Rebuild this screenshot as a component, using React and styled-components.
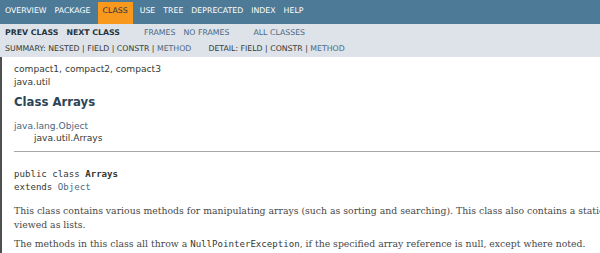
import React from 'react';
import styled, { createGlobalStyle } from 'styled-components';

const GlobalStyle = createGlobalStyle`
  html, body {
    margin: 0;
    padding: 0;
    overflow: hidden;
    background: #ffffff;
  }
  body {
    font-family: 'DejaVu Sans', Arial, Helvetica, sans-serif;
    color: #353833;
  }
`;

const Page = styled.div`
  width: 1000px;
`;

const TopNav = styled.nav`
  display: flex;
  height: 24px;
  box-sizing: border-box;
  padding: 2px 0 0 1px;
  background: #4d7a97;
`;

const NavItem = styled.span`
  padding: 4px ${p => (p.$active ? '5px' : '4px')};
  margin: 0 ${p => (p.$active ? '3px' : '0')};
  font-size: 7.8px;
  line-height: 10px;
  text-transform: uppercase;
  color: ${p => (p.$active ? '#253441' : '#ffffff')};
  background: ${p => (p.$active ? '#f8981d' : 'transparent')};
`;

const SubNav = styled.div`
  height: 33px;
  box-sizing: border-box;
  padding-top: 4px;
  background: #dee3e9;
`;

const SubRow = styled.div`
  display: flex;
  padding-left: 1px;
  margin-top: ${p => (p.$second ? '6px' : '0')};
  font-size: 7.8px;
  line-height: 10px;
  text-transform: uppercase;
  white-space: pre;
`;

const SubList = styled.div`
  display: flex;
  margin-right: ${p => (p.$tight ? '9px' : '16px')};
`;

const SubItem = styled.span`
  padding: 0 4px;
  font-weight: ${p => (p.$bold ? 'bold' : 'normal')};
  color: ${p => (p.$link ? '#4a6782' : p.$bold ? '#253441' : '#353833')};
`;

const Plain = styled.span`
  color: ${p => (p.$link ? '#4a6782' : '#353833')};
`;

const Content = styled.main`
  border-left: 2px solid #505050;
  padding: 6px 13px 0 12px;
  min-height: 200px;
`;

const SubTitle = styled.div`
  font-size: 9.1px;
  line-height: 13px;
`;

const Title = styled.h2`
  margin: 6px 0 0;
  font-size: 11.7px;
  line-height: 14px;
  font-weight: bold;
  color: #2c4557;
`;

const Inheritance = styled.ul`
  margin: 11px 0 0;
  padding: 0;
  list-style: none;
  font-size: 9.1px;
  line-height: 12px;
`;

const InheritItem = styled.li`
  padding-left: ${p => (p.$depth ? `${p.$depth * 20}px` : '0')};
  color: ${p => (p.$link ? '#4a6782' : '#353833')};
`;

const Rule = styled.hr`
  margin: 6.5px 0 0;
  border: 0;
  border-top: 1px solid #a6a6a6;
  height: 0;
`;

const Signature = styled.pre`
  margin: 16px 0 0;
  font-family: 'DejaVu Sans Mono', monospace;
  font-size: 9.1px;
  line-height: 13px;
  color: #353833;
`;

const TypeName = styled.b`
  font-weight: bold;
`;

const Block = styled.p`
  margin: ${p => (p.$first ? '10.5px' : '4px')} 0 0;
  font-family: 'DejaVu Serif', Georgia, 'Times New Roman', serif;
  font-size: 9.3px;
  line-height: 14.3px;
  color: #474747;
`;

const Code = styled.code`
  font-family: 'DejaVu Sans Mono', monospace;
  font-size: 9.1px;
  color: #353833;
`;

const topItems = ['Overview', 'Package', 'Class', 'Use', 'Tree', 'Deprecated', 'Index', 'Help'];

const App = () => (
  <Page>
    <GlobalStyle />
    <TopNav>
      {topItems.map(item => (
        <NavItem key={item} $active={item === 'Class'}>
          {item}
        </NavItem>
      ))}
    </TopNav>
    <SubNav>
      <SubRow>
        <SubList>
          <SubItem $bold>Prev Class</SubItem>
          <SubItem $bold>Next Class</SubItem>
        </SubList>
        <SubList>
          <SubItem $link>Frames</SubItem>
          <SubItem $link>No Frames</SubItem>
        </SubList>
        <SubList>
          <SubItem $link>All Classes</SubItem>
        </SubList>
      </SubRow>
      <SubRow $second>
        <SubList $tight>
          <SubItem>
            {'Summary:\u00a0Nested\u00a0|\u00a0Field\u00a0|\u00a0Constr\u00a0|\u00a0'}
            <Plain $link>Method</Plain>
          </SubItem>
        </SubList>
        <SubList $tight>
          <SubItem>
            {'Detail:\u00a0Field\u00a0|\u00a0Constr\u00a0|\u00a0'}
            <Plain $link>Method</Plain>
          </SubItem>
        </SubList>
      </SubRow>
    </SubNav>
    <Content>
      <SubTitle>compact1, compact2, compact3</SubTitle>
      <SubTitle>java.util</SubTitle>
      <Title>Class Arrays</Title>
      <Inheritance>
        <InheritItem $link>java.lang.Object</InheritItem>
        <InheritItem $depth={1}>java.util.Arrays</InheritItem>
      </Inheritance>
      <Rule />
      <Signature>
        public class <TypeName>Arrays</TypeName>
        {'\n'}extends <Plain $link>Object</Plain>
      </Signature>
      <Block $first>
        This class contains various methods for manipulating arrays (such as sorting and
        searching). This class also contains a static factory that allows arrays to be
        <br />
        viewed as lists.
      </Block>
      <Block>
        The methods in this class all throw a <Code>NullPointerException</Code>, if the
        specified array reference is null, except where noted.
      </Block>
    </Content>
  </Page>
);

export default App;
